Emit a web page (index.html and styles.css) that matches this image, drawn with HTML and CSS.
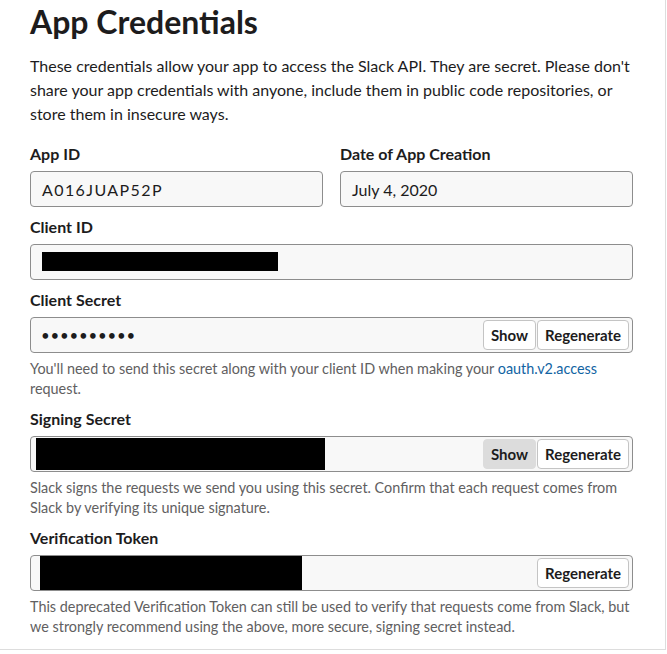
FILE: index.html
```html
<!DOCTYPE html>
<html lang="en">
  <head>
    <meta charset="UTF-8" />
    <meta name="viewport" content="width=device-width, initial-scale=1.0" />
    <title>App Credentials</title>
    <link rel="stylesheet" href="styles.css">
  </head>
  <body>
    <div class="card">
      <h1 class="title">App Credentials</h1>
      <p class="intro">
        These credentials allow your app to access the Slack API. They are secret. Please don't
        share your app credentials with anyone, include them in public code repositories, or
        store them in insecure ways.
      </p>

      <!-- App ID + date -->
      <div class="two-col">
        <div class="field">
          <label class="label">App ID</label>
          <div class="box"><span class="app-id">A016JUAP52P</span></div>
        </div>
        <div class="field">
          <label class="label">Date of App Creation</label>
          <div class="box">July 4, 2020</div>
        </div>
      </div>

      <div class="field">
        <label class="label">Client ID</label>
        <div class="box">
          <span class="redact redact-client"></span>
        </div>
      </div>

      <div class="field">
        <label class="label">Client Secret</label>
        <div class="box box-secret">
          <span class="dots">&#8226;&#8226;&#8226;&#8226;&#8226;&#8226;&#8226;&#8226;&#8226;&#8226;</span>
          <div class="actions">
            <button class="btn">Show</button>
            <button class="btn">Regenerate</button>
          </div>
        </div>
        <p class="help">
          You'll need to send this secret along with your client ID when making your
          <a href="#" class="link">oauth.v2.access</a> request.
        </p>
      </div>

      <div class="field">
        <label class="label">Signing Secret</label>
        <div class="box box-secret">
          <span class="redact redact-signing"></span>
          <div class="actions">
            <button class="btn btn-pressed">Show</button>
            <button class="btn">Regenerate</button>
          </div>
        </div>
        <p class="help">
          Slack signs the requests we send you using this secret. Confirm that each request comes from
          Slack by verifying its unique signature.
        </p>
      </div>

      <div class="field">
        <label class="label">Verification Token</label>
        <div class="box box-secret">
          <span class="redact redact-token"></span>
          <div class="actions">
            <button class="btn">Regenerate</button>
          </div>
        </div>
        <p class="help">
          This deprecated Verification Token can still be used to verify that requests come from Slack, but
          we strongly recommend using the above, more secure, signing secret instead.
        </p>
      </div>
    </div>
  </body>
</html>
```

FILE: styles.css
```css
/* Trang chung */
body {
  margin: 0;
  font-family: Lato, "Noto Sans", sans-serif;
  color: #1d1c1d;
  background: #fff;
}

/* Khung chính */
.card {
  width: 666px;
  box-sizing: border-box;
  padding: 3px 32px 3px 30px;
  border-right: 1px solid #ddd;
  border-bottom: 1px solid #ddd;
}

.title {
  margin: 0;
  font-size: 32px;
  font-weight: 700;
  line-height: 38px;
}

.intro {
  margin: 13px 0 17px;
  font-size: 16px;
  line-height: 24px;
}

/* Hai cột App ID / Date */
.two-col {
  display: grid;
  grid-template-columns: 1fr 1fr;
  gap: 17px;
}

.field {
  margin-bottom: 9px;
}

.label {
  display: block;
  font-size: 16px;
  font-weight: 700;
  line-height: 22px;
  margin-bottom: 6px;
}

.box {
  display: flex;
  align-items: center;
  height: 36px;
  box-sizing: border-box;
  padding: 0 11px;
  border: 1px solid #8d8d8d;
  border-radius: 4px;
  background: #f8f8f8;
  font-size: 16px;
}

.app-id {
  letter-spacing: 1.4px;
}

.box-secret {
  padding: 0 3px 0 10px;
}

.dots {
  font-size: 15px;
  letter-spacing: 0.8px;
}

/* Ô bị che */
.redact {
  display: block;
  background: #000;
}

.redact-client {
  width: 236px;
  height: 19px;
  margin-top: -2px;
}

.redact-signing {
  width: 289px;
  height: 32px;
  margin-left: -5px;
}

.redact-token {
  width: 262px;
  height: 34px;
  margin-left: -1px;
}

.actions {
  display: flex;
  margin-left: auto;
}

.btn {
  height: 30px;
  padding: 0 7px;
  border: 1px solid #c4c4c4;
  border-radius: 4px;
  background: #fff;
  font-family: Lato, "Noto Sans", sans-serif;
  font-size: 15px;
  font-weight: 700;
  color: #1d1c1d;
}

.btn + .btn {
  margin-left: 1px;
}

.btn-pressed {
  background: #dcdcdc;
  border-color: #dcdcdc;
}

.help {
  margin: 6px 0 0;
  font-size: 14.4px;
  line-height: 20px;
  color: #616061;
}

.link {
  color: #1264a3;
  text-decoration: none;
}
```
